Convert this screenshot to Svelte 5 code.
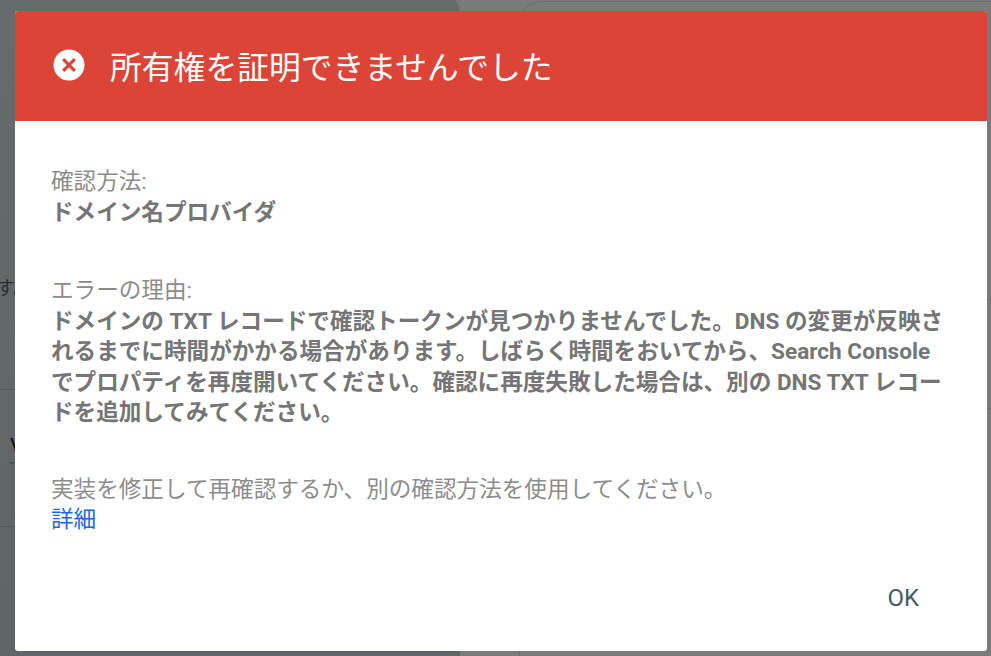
<script>
  const blocks = [
    { label: '確認方法:', strong: 'ドメイン名プロバイダ' },
    {
      label: 'エラーの理由:',
      strong:
        'ドメインの TXT レコードで確認トークンが見つかりませんでした。DNS の変更が反映されるまでに時間がかかる場合があります。しばらく時間をおいてから、Search Console でプロパティを再度開いてください。確認に再度失敗した場合は、別の DNS TXT レコードを追加してみてください。'
    }
  ];
</script>

<div class="page">
  <div class="backdrop" aria-hidden="true">
    <div class="left-card">
      <span class="peek-text">す。</span>
      <span class="rule rule-a"></span>
      <span class="peek-w">V</span>
      <span class="rule-short"></span>
      <span class="rule rule-b"></span>
    </div>
    <div class="right-card">
      <span class="rule rule-c"></span>
      <span class="rule rule-d"></span>
    </div>
  </div>

  <section class="dialog">
    <header class="head">
      <svg class="err" viewBox="0 0 32 32" width="32" height="32" aria-hidden="true">
        <circle cx="16" cy="16" r="15.5" fill="#fff" />
        <path d="M10.2 10.2 21.8 21.8M21.8 10.2 10.2 21.8" stroke="#dd4438" stroke-width="3.2" fill="none" />
      </svg>
      <h1>所有権を証明できませんでした</h1>
    </header>

    <div class="body">
      {#each blocks as b}
        <p class="block">
          <span class="label">{b.label}</span>
          <strong>{b.strong}</strong>
        </p>
      {/each}
      <p class="block last">
        <span class="label">実装を修正して再確認するか、別の確認方法を使用してください。</span>
        <a href="#details">詳細</a>
      </p>
    </div>

    <footer class="foot">
      <button type="button">OK</button>
    </footer>
  </section>
</div>

<style>
  :global(body) {
    margin: 0;
    background: #7a7a7a;
  }
  .page {
    position: relative;
    width: 991px;
    height: 656px;
    overflow: hidden;
    box-sizing: border-box;
    padding: 11px 4px 5px 15px;
    font-family: Roboto, "Noto Sans CJK JP", sans-serif;
  }
  .backdrop {
    position: absolute;
    inset: 0;
    background: #7a7a7a;
  }
  .left-card {
    position: absolute;
    left: 0;
    top: -10px;
    width: 460px;
    height: 680px;
    background: linear-gradient(180deg, #666b6e 0%, #5f6467 100%);
    border-top-right-radius: 24px;
  }
  .right-card {
    position: absolute;
    left: 519px;
    top: 1px;
    width: 480px;
    height: 670px;
    border: 1px solid #6b6b6b;
    border-top-left-radius: 22px;
    box-sizing: border-box;
  }
  .peek-text {
    position: absolute;
    left: -4px;
    top: 287px;
    font-size: 19px;
    line-height: 24px;
    color: #2c2f31;
  }
  .peek-w {
    position: absolute;
    left: 10px;
    top: 445px;
    font-size: 22px;
    line-height: 24px;
    color: #111;
  }
  .rule {
    position: absolute;
    left: 0;
    right: 0;
    height: 1px;
    background: #55595c;
  }
  .rule-a { top: 399px; }
  .rule-b { top: 536px; }
  .rule-short {
    position: absolute;
    left: 10px;
    top: 472px;
    width: 10px;
    height: 2px;
    background: #4e5255;
  }
  .rule-c { top: 297px; background: #6c6c6c; }
  .rule-d { top: 406px; background: #6c6c6c; }
  .dialog {
    position: relative;
    display: flex;
    flex-direction: column;
    width: 972px;
    height: 640px;
    background: #fff;
    border-radius: 3px;
    overflow: hidden;
  }
  .head {
    display: flex;
    align-items: center;
    gap: 25px;
    flex: 0 0 110px;
    padding: 0 38px;
    box-sizing: border-box;
    background: #dd4438;
    color: #fff;
  }
  .err {
    flex: none;
    margin-top: -2px;
  }
  h1 {
    margin: 4px 0 0;
    font-size: 31.8px;
    font-weight: 400;
    line-height: 40px;
  }
  .body {
    flex: 1;
    padding: 46px 38px 0 36px;
    color: #757575;
    font-size: 22.6px;
    line-height: 30.5px;
  }
  .block {
    margin: 0 0 48px;
  }
  .block + .block {
    margin-bottom: 46px;
  }
  .block.last {
    margin: 0;
  }
  .label,
  strong,
  a {
    display: block;
  }
  .label {
    color: #8c8c8c;
  }
  strong {
    font-weight: 700;
    color: #757575;
  }
  a {
    color: #1967e8;
    text-decoration: none;
  }
  .foot {
    display: flex;
    justify-content: flex-end;
    padding: 0 68px 38px 0;
  }
  button {
    border: 0;
    padding: 0;
    background: none;
    font: 400 24px/30px Roboto, sans-serif;
    color: #455a64;
  }
</style>
